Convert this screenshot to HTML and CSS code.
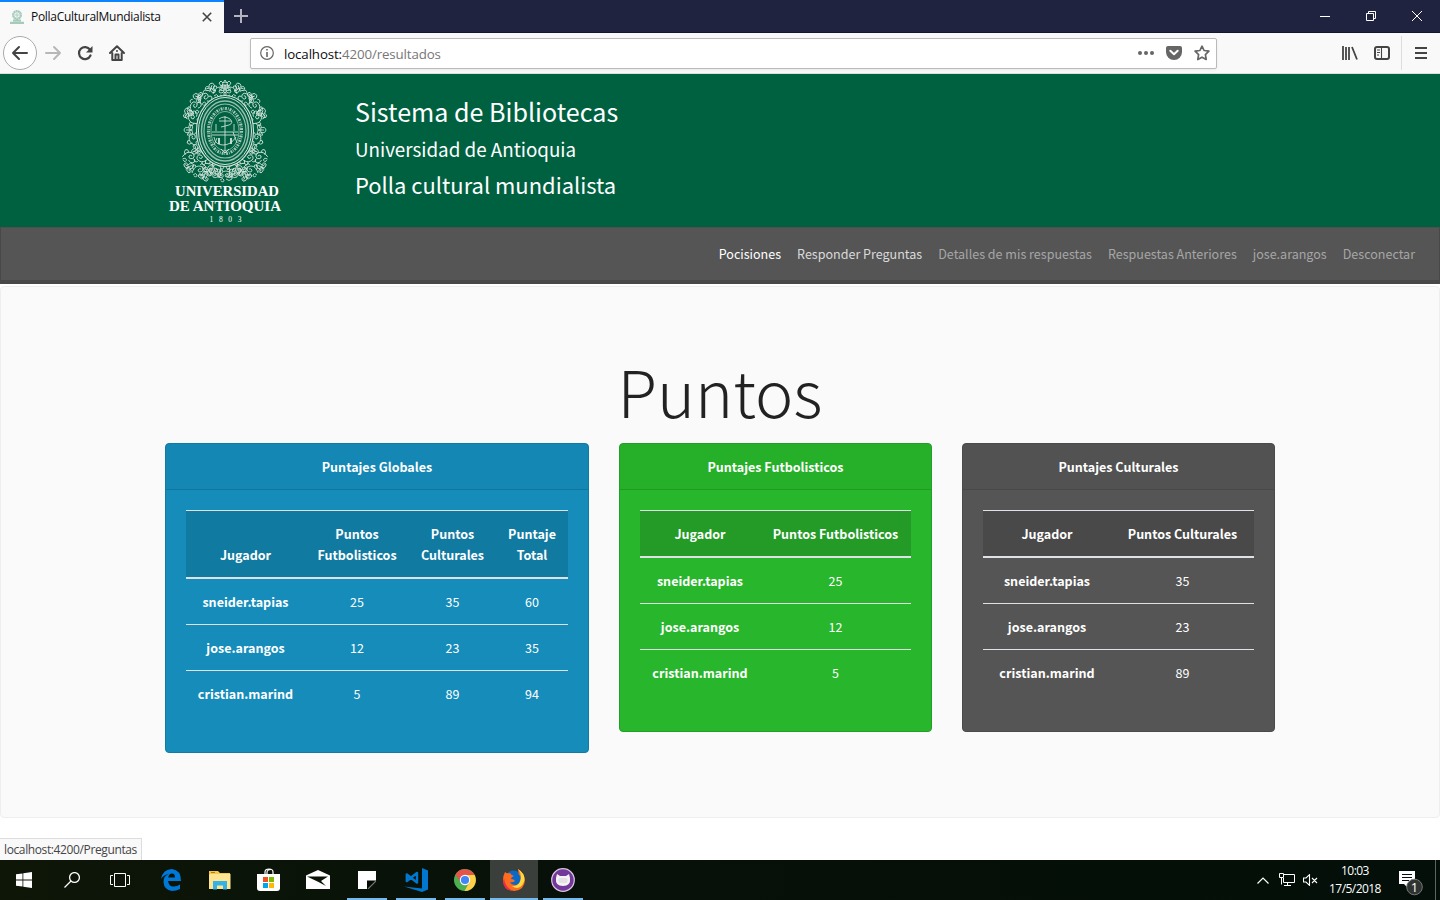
FILE: index.html
```html
<!DOCTYPE html>
<html lang="es">
<head>
<meta charset="utf-8">
<title>PollaCulturalMundialista</title>
<link rel="stylesheet" href="styles.css">
</head>
<body>
<div class="tabs">
  <div class="tab">
    <svg class="favicon" width="14" height="14" viewBox="0 0 14 14"><g fill="none" stroke="#a5cbbb"><circle cx="7" cy="5" r="3.8" stroke-width="2.400" stroke-dasharray="2 .3"/><circle cx="7" cy="5" r="1.2"/><path d="M3 10.500h8M0 12.800h14" stroke-width="2.200"/></g></svg>
    <span class="tab-title">PollaCulturalMundialista</span>
    <svg class="tab-close" width="10" height="10" viewBox="0 0 10 10"><path d="M.8.8l8.400 8.400M9.200.8L.8 9.200" stroke="#444" stroke-width="1.600"/></svg>
  </div>
  <svg class="newtab" width="14" height="14" viewBox="0 0 14 14"><path d="M7 0v14M0 7h14" stroke="#b4b4c1" stroke-width="2"/></svg>
  <div class="window-controls">
    <svg width="10" height="10"><path d="M0 5.500h10" stroke="#fff"/></svg>
    <svg width="10" height="10" fill="none" stroke="#fff"><path d="M.5 2.500h7v7h-7zM2.500 2.500v-2h7v7h-2"/></svg>
    <svg width="10" height="10"><path d="M0 0l10 10M10 0L0 10" stroke="#fff"/></svg>
  </div>
</div>
<div class="toolbar">
  <div class="back"><svg width="18" height="16" viewBox="0 0 18 16" fill="none" stroke="#444" stroke-width="2" stroke-linecap="round" stroke-linejoin="round"><path d="M8 2L2 8l6 6M2 8h14"/></svg></div>
  <svg class="forward" width="18" height="16" viewBox="0 0 18 16" fill="none" stroke="#b7b7b7" stroke-width="2" stroke-linecap="round" stroke-linejoin="round"><path d="M10 2l6 6-6 6M16 8H2"/></svg>
  <svg class="reload" width="16" height="16" viewBox="0 0 16 16"><path d="M13 4.700A6 6 0 1 0 13.500 10.500" fill="none" stroke="#444" stroke-width="2.200" stroke-linecap="round"/><path d="M15.500 1v6.500H9z" fill="#444"/></svg>
  <svg class="home" width="16" height="16" viewBox="0 0 16 16" fill="none" stroke="#444" stroke-width="2" stroke-linecap="round" stroke-linejoin="round"><path d="M1 8l7-6.700L15 8M3.300 8v7h9.400V8"/><path d="M6.500 15V9.500h3V15M8 6v.1"/></svg>
  <div class="urlbar">
    <svg width="14" height="14" viewBox="0 0 14 14"><circle cx="7" cy="7" r="6.300" fill="none" stroke="#666" stroke-width="1.200"/><path d="M7 6v5M7 3v1.600" stroke="#666" stroke-width="1.600"/></svg>
    <div class="url"><b>localhost:</b>4200/resultados</div>
    <svg class="dots" width="16" height="4" fill="#666"><circle cx="2" cy="2" r="2"/><circle cx="8" cy="2" r="2"/><circle cx="14" cy="2" r="2"/></svg>
    <svg class="pocket" width="16" height="14" viewBox="0 0 16 14"><path d="M2 0h12q2 0 2 2v4a8 8 0 0 1-16 0V2q0-2 2-2z" fill="#666"/><path d="M4.300 4.800L8 8.300l3.700-3.500" fill="none" stroke="#fff" stroke-width="2" stroke-linecap="round" stroke-linejoin="round"/></svg>
    <svg width="16" height="16" viewBox="0 0 16 16"><path d="M8 1.200l2.100 4.300 4.800.7-3.500 3.400.8 4.900L8 12.200l-4.200 2.300.8-4.900L1.100 6.200l4.800-.7z" fill="none" stroke="#666" stroke-width="1.700" stroke-linejoin="round"/></svg>
  </div>
  <svg class="library" width="16" height="14" viewBox="0 0 16 14" fill="none" stroke="#444"><path d="M1 0v14M4 1v13M7 1v13M10 1l5 12.500" stroke-width="1.800"/></svg>
  <svg class="sidebar" width="16" height="14" viewBox="0 0 16 14" fill="none" stroke="#444"><rect x="1" y="1" width="14" height="12" rx="2" stroke-width="2"/><path d="M7.500 1v12M3 4h3M3 6.500h3M3 9h2" stroke-width="1.100"/></svg>
  <div class="divider"></div>
  <svg class="menu" width="12" height="12" viewBox="0 0 12 12"><path d="M0 1h12M0 6h12M0 11h12" stroke="#444" stroke-width="2"/></svg>
</div>
<header class="banner">
  <svg class="crest" width="140" height="152" viewBox="155 75 140 152" role="img">
    <defs>
      <g id="scroll"><path d="M-6 3Q-4-4 1-4Q5-4 5-1Q5 2 2 2Q0 2 0 0Q1-2 3-1M-4 0Q-7-3-5-5Q-2-6-2-3M1 4Q4 7 7 4Q8 1 5 1M-5 5Q-2 2-1 5Q-1 8-4 6M2-5Q4-8 6-5"/></g>
      <g id="leaf"><path d="M0-5Q4-4 2 0Q6-1 5 3Q1 5 0 1Q-1 5-5 3Q-6-1-2 0Q-4-4 0-5M0-3v7M-4 2l4-2 4 2"/></g>
      <g id="side">
        <use href="#leaf" transform="translate(211 88) rotate(20)"/><use href="#scroll" x="219" y="91"/>
        <use href="#scroll" transform="translate(204 98) rotate(-30)"/><use href="#leaf" transform="translate(198 97) rotate(-70)"/>
        <use href="#scroll" transform="translate(194 107) rotate(-60)"/><use href="#leaf" transform="translate(188 113) rotate(-20)"/>
        <use href="#scroll" transform="translate(193 119) rotate(-110)"/><use href="#leaf" transform="translate(189 130) rotate(-90)"/>
        <use href="#scroll" transform="translate(193 139) rotate(-80)"/><use href="#leaf" transform="translate(196 150) rotate(-130)"/>
        <use href="#scroll" transform="translate(189 156) rotate(20)"/><use href="#scroll" transform="translate(202 158) rotate(-150)"/>
        <use href="#leaf" transform="translate(189 167) rotate(60)"/><use href="#scroll" transform="translate(198 170)"/>
        <use href="#leaf" transform="translate(204 176) rotate(30)"/><use href="#scroll" transform="translate(210 168) rotate(70)"/>
        <use href="#leaf" transform="translate(218 174)"/><use href="#scroll" transform="translate(217 169) rotate(120)"/>
        <use href="#leaf" transform="translate(209 170) rotate(40)"/>
      </g>
    </defs>
    <g fill="none" stroke="#d3e5dc" stroke-width=".85">
      <use href="#side"/><use href="#side" transform="translate(450 0) scale(-1 1)"/>
      <use href="#leaf" x="225" y="87"/><use href="#scroll" x="225" y="175"/>
      <path d="M219 83l2-2 2 2 2-3 2 3 2-2 2 2-2 3h-8z"/>
      <ellipse cx="225" cy="131" rx="28.500" ry="35.500" fill="#006141" stroke-width="1.100"/>
      <ellipse cx="225" cy="131" rx="26.500" ry="33.500" stroke-width="1"/>
      <ellipse cx="225" cy="131" rx="23.500" ry="30" stroke="#97c0af" stroke-width="1.500"/>
      <ellipse cx="225" cy="131" rx="21" ry="27" stroke="#97c0af" stroke-width="1.200"/>
      <ellipse cx="225" cy="131" rx="16.500" ry="22.500" stroke-width="3.200" stroke-dasharray="1.800 1.100 .7 1" stroke="#a4c8b9"/>
      <ellipse cx="225" cy="131" rx="14" ry="19.500" stroke-width=".6"/>
      <path d="M225 116v37M219 121h12M219 119q5-4 11 0q4 4-1 6l-8 2M212 132h26M212 135h26M214 137q1 8 9 8t13-8M217 138l-3 7M233 132l4 11M221 149l4 4 4-4M216 124v7M234 124v7"/>
      <path d="M219 138v6M231 138v6" stroke-width="1.800"/>
    </g>
    <g class="crest-text" fill="#fff" text-anchor="middle">
      <text x="227" y="195.500" font-size="14" textLength="104" lengthAdjust="spacingAndGlyphs">UNIVERSIDAD</text>
      <text x="225" y="210.500" font-size="14" textLength="112" lengthAdjust="spacingAndGlyphs">DE ANTIOQUIA</text>
      <text class="year" x="225.500" y="222" font-size="7.500" textLength="32">1803</text>
    </g>
  </svg>
  <div class="titles">
    <div class="title-main">Sistema de Bibliotecas</div>
    <div class="title-sub">Universidad de Antioquia</div>
    <div class="title-app">Polla cultural mundialista</div>
  </div>
</header>
<nav class="nav">
  <a class="active">Pocisiones</a><a class="hover">Responder Preguntas</a><a>Detalles de mis respuestas</a><a>Respuestas Anteriores</a><a>jose.arangos</a><a>Desconectar</a>
</nav>
<main class="jumbotron">
  <h1>Puntos</h1>
  <div class="cards">
    <section class="card blue">
      <div class="card-header">Puntajes Globales</div>
      <table>
        <colgroup><col class="g1"><col class="g2"><col class="g3"><col class="g4"></colgroup>
        <thead><tr><th>Jugador</th><th>Puntos<br>Futbolisticos</th><th>Puntos<br>Culturales</th><th>Puntaje<br>Total</th></tr></thead>
        <tbody>
          <tr><th>sneider.tapias</th><td>25</td><td>35</td><td>60</td></tr>
          <tr><th>jose.arangos</th><td>12</td><td>23</td><td>35</td></tr>
          <tr><th>cristian.marind</th><td>5</td><td>89</td><td>94</td></tr>
        </tbody>
      </table>
    </section>
    <section class="card green">
      <div class="card-header">Puntajes Futbolisticos</div>
      <table>
        <colgroup><col class="s1"><col class="s2"></colgroup>
        <thead><tr><th>Jugador</th><th>Puntos Futbolisticos</th></tr></thead>
        <tbody>
          <tr><th>sneider.tapias</th><td>25</td></tr>
          <tr><th>jose.arangos</th><td>12</td></tr>
          <tr><th>cristian.marind</th><td>5</td></tr>
        </tbody>
      </table>
    </section>
    <section class="card gray">
      <div class="card-header">Puntajes Culturales</div>
      <table>
        <colgroup><col class="c1"><col class="c2"></colgroup>
        <thead><tr><th>Jugador</th><th>Puntos Culturales</th></tr></thead>
        <tbody>
          <tr><th>sneider.tapias</th><td>35</td></tr>
          <tr><th>jose.arangos</th><td>23</td></tr>
          <tr><th>cristian.marind</th><td>89</td></tr>
        </tbody>
      </table>
    </section>
  </div>
</main>
<div class="status-row"><div class="status">localhost:4200/Preguntas</div></div>
<footer class="taskbar">
  <div class="system">
    <span><svg width="16" height="16" viewBox="0 0 16 16" fill="#fff"><path d="M0 2.300L6.500 1.400V7.600H0zM7.300 1.300L16 0v7.600H7.300zM0 8.400h6.500v6.200L0 13.700zM7.300 8.400H16V16l-8.700-1.300z"/></svg></span>
    <span><svg width="16" height="16" viewBox="0 0 16 16" fill="none" stroke="#fff" stroke-width="1.300"><circle cx="10.500" cy="5.500" r="4.900"/><path d="M7 9L.5 15.500"/></svg></span>
    <span><svg width="20" height="14" viewBox="0 0 20 14" fill="none" stroke="#fff"><path d="M4.500.5h11v13h-11zM3 2.500H.5v9H3M17 2.500h2.500v9H17"/></svg></span>
  </div>
  <div class="apps">
    <span><svg width="20" height="22" viewBox="0 0 20 22"><path d="M0 10Q2 0 11 0q9 1 9 12H7q1 6 6 5.500 3 0 6-2v4.500q-4 2-8 2Q3 21 2.500 13 2 7 8 4.700 3 5.500 0 10zM7.200 8.500H14Q14 4.500 11 4.500T7.200 8.500z" fill="#0078d7" fill-rule="evenodd"/></svg></span>
    <span><svg width="22" height="19" viewBox="0 0 22 19"><path d="M0 0h9l2 2h10v16H0z" fill="#f3c84b"/><path d="M1 3h20.500v15H0V4z" fill="#ffe592"/><path d="M4 10h14v8.500h-4v-4H8v4H4z" fill="#35b1e6"/><path d="M2 1.500h4" stroke="#b97b13"/></svg></span>
    <span><svg width="24" height="24" viewBox="0 0 24 24"><path d="M8 7V4q0-3 4-3t4 3v3M10 7V4.500q0-3 4-3" fill="none" stroke="#fff" stroke-width="1.200"/><path d="M0 6h23v14q0 3-3 3H3q-3 0-3-3z" fill="#fff"/><path d="M6 9h5v5H6z" fill="#f25022"/><path d="M12 9h5v5h-5z" fill="#7fba00"/><path d="M6 15h5v5H6z" fill="#00a4ef"/><path d="M12 15h5v5h-5z" fill="#ffb900"/></svg></span>
    <span><svg width="24" height="20" viewBox="0 0 24 20"><path d="M0 5.500L12 0l12 5.500V19H0z" fill="#fff"/><path d="M1 6.500h21L15 11l5 5-8-4.300z" fill="#0a1306"/></svg></span>
    <span class="open"><svg width="18" height="18"><path d="M0 0h18v18H0z" fill="#fff"/><path d="M9 9.500h9V10l-8 8H9z" fill="#060a04"/><path d="M10.500 18L18 10.500V18z" fill="#0a1208"/><path d="M10 17.500l7.500-7.500" stroke="#6e736c" stroke-width=".8"/></svg></span>
    <span class="open"><svg width="24" height="24" viewBox="0 0 24 24"><path d="M18 0l6 2.500v19L18 24 0 18.500l18 2z" fill="#0078d0"/><path d="M2.800 6.500L13 14.500V5L2.800 13z" fill="none" stroke="#0078d0" stroke-width="2.400" stroke-linejoin="round"/></svg></span>
    <span class="open"><svg width="22" height="22" viewBox="0 0 22 22"><circle cx="11" cy="11" r="11" fill="#4caf50"/><path d="M1.500 5.500A11 11 0 0 1 20.600 6H11l-4.300 7.500z" fill="#e5534b"/><path d="M20.600 6A11 11 0 0 1 10.500 22l4.800-8.500L11 6z" fill="#ffcf46"/><circle cx="11" cy="11" r="5.200" fill="#fff"/><circle cx="11" cy="11" r="4.100" fill="#4285f4"/></svg></span>
    <span class="open current"><svg width="24" height="24" viewBox="0 0 24 24"><circle cx="11.500" cy="11" r="8.500" fill="#0869c7"/><path d="M3 4Q0 10 1.500 15q3 8 11 8 10-1 10.500-11Q22 5 16 1q0 5 2.500 8 1 7-4.500 8-5 0-6-3 3 1 5-1-1-2-4-2 0-2 3-3-3-1-4-3Q5 6 3 4z" fill="#ff6c20"/><path d="M16 1q4 5 2.500 11-2 7-9 6 8 5 12-3Q25 7 16 1z" fill="#ffd83f"/><path d="M2 10q1 10 10 13-10 0-11-9z" fill="#e92d48"/></svg></span>
    <span class="open"><svg width="24" height="24" viewBox="0 0 24 24"><circle cx="12" cy="12" r="11.300" fill="#74389a" stroke="#d8c8e2" stroke-width="1.200"/><path d="M6 6l3 2h6l3-2 1 4q1 8-7 8T5 10z" fill="#f4f4f4"/><rect x="7.500" y="10" width="9" height="5" rx="2" fill="#e2e2e2"/></svg></span>
  </div>
  <div class="tray">
    <svg width="12" height="7" viewBox="0 0 12 7"><path d="M.5 6.500L6 1l5.500 5.500" fill="none" stroke="#fff" stroke-width="1.200"/></svg>
    <svg class="net" width="16" height="14" viewBox="0 0 16 14" fill="none" stroke="#fff"><path d="M5 1.500h10.500v8H4.500V5M8.500 9.500v3M5 12.500h7M.5.500h4v4h-4zM2.500 4.500v7"/></svg>
    <svg class="sound" width="15" height="12" viewBox="0 0 15 12" fill="none" stroke="#fff" stroke-width="1.100"><path d="M.5 4H3l3.500-3.300v10.600L3 8H.5zM9 4l5 5M14 4L9 9"/></svg>
    <div class="clock">10:03<br>17/5/2018</div>
    <svg class="notify" width="26" height="26" viewBox="0 0 26 26"><path d="M0 1h16v13H8v3l-3-3H0z" fill="#fff"/><path d="M3 4.500h10M3 7.500h10M3 10.500h7" stroke="#05100a"/><circle cx="15.500" cy="17" r="7.800" fill="#303431" stroke="#777"/><text x="15.500" y="21.500" text-anchor="middle" fill="#fff" font-size="13">1</text></svg>
    <div class="desk"></div>
  </div>
</footer>
</body>
</html>
```
FILE: styles.css
```css
* { box-sizing: border-box; }
body { margin: 0; width: 1440px; height: 900px; overflow: hidden; display: flex; flex-direction: column; background: #fff; font: 12.54px/21px "Noto Sans CJK SC", sans-serif; color: #222; }
svg { display: block; flex: none; }
.tabs { height: 33px; flex: none; display: flex; align-items: center; background: #202340; border-bottom: 1px solid #14162b; }
.tab { width: 224px; height: 33px; flex: none; align-self: flex-start; display: flex; align-items: center; padding: 0 12px 1px 10px; background: #f9f9fa; border-top: 2px solid #0a84ff; }
.tab-title { font: 12px/16px "Open Sans", sans-serif; color: #0c0c0d; letter-spacing: -.29px; margin-left: 7px; flex: 1; white-space: nowrap; }
.newtab { margin-left: 10px; }
.window-controls { margin-left: auto; display: flex; gap: 36px; padding-right: 18px; }
.toolbar { height: 41px; flex: none; display: flex; align-items: center; background: #f9f9fa; border-bottom: 1px solid #ddd; padding-left: 3px; }
.back { width: 34px; height: 34px; flex: none; border: 1px solid #aaa; border-radius: 50%; background: #fff; display: flex; align-items: center; justify-content: center; }
.forward { margin-left: 7px; }
.reload { margin-left: 15px; }
.home { margin-left: 16px; }
.urlbar { width: 967px; height: 31px; flex: none; margin-left: 125px; border: 1px solid #bbb; border-radius: 2px; box-shadow: 0 1px 3px #0001; background: #fff; display: flex; align-items: center; padding: 0 6px 0 9px; }
.url { flex: 1; margin-left: 10px; padding-top: 2px; font: 13.3px/20px "Open Sans", sans-serif; letter-spacing: -.12px; color: #777; }
.url b { font-weight: 400; color: #0c0c0d; }
.pocket { margin: 0 12px; }
.library { margin-left: 125px; }
.sidebar { margin-left: 16px; }
.divider { width: 1px; height: 34px; margin-left: 11px; background: #ddd; }
.menu { margin-left: 13px; }
.banner { height: 153px; flex: none; background: #006141; display: flex; padding-left: 155px; }
.crest { margin-top: 1px; }
.crest-text { font-family: "Liberation Serif", serif; font-weight: 700; }
.crest-text .year { font-weight: 400; }
.titles { margin-left: 60px; padding-top: 18px; color: #fff; white-space: nowrap; }
.title-main { font-size: 25.1px; line-height: 38px; }
.title-sub { font-size: 18.8px; line-height: 36px; margin-top: 1px; }
.title-app { font-size: 21.95px; line-height: 36px; }
.nav { height: 57px; flex: none; background: #555; border: 1px solid #484848; border-top-color: #4e4e4e; border-bottom: 4px solid #484848; display: flex; justify-content: flex-end; align-items: center; gap: 16px; padding: 0 24px 2px 0; color: #a6a6a6; }
.nav .active { color: #fff; }
.nav .hover { color: #dadada; }
.jumbotron { height: 532px; flex: none; margin-top: 2px; background: #fafafa; border: 1px solid #eee; border-radius: 4px; padding: 61px 164px 0; }
h1 { margin: 0 0 10px; height: 85px; line-height: 85px; font-size: 64.5px; font-weight: 300; text-align: center; color: #222; }
.cards { display: flex; gap: 30px; align-items: flex-start; }
.card { width: 313px; padding: 0 20px 36px; border: 1px solid #4a4a4a; border-radius: 4px; background: #555; color: #fff; text-align: center; }
.card.blue { width: 424px; background: #158cba; border-color: #127ba3; }
.card.green { background: #28b62c; border-color: #239f27; }
.card-header { height: 46px; margin: 0 -20px 20px; line-height: 45px; font-weight: 700; background: #00000008; border-bottom: 1px solid #0000001f; }
table { width: 100%; border-collapse: separate; border-spacing: 0; table-layout: fixed; }
th, td { padding: 12px 0; height: 46px; border-top: 1px solid #dee2e6; vertical-align: bottom; }
th { font-weight: 700; }
td { font-weight: 400; }
thead th { background: #117aa1; border-bottom: 2px solid #dee2e6; height: 48px; }
tbody tr:first-child th, tbody tr:first-child td { border-top: 0; height: 45px; }
.green thead th { background: #239b26; }
.gray thead th { background: #494949; }
.g1 { width: 119px; } .g2 { width: 104px; } .g3 { width: 87px; } .g4 { width: 72px; }
.s1 { width: 120px; } .s2 { width: 151px; } .c1 { width: 128px; } .c2 { width: 143px; }
.status-row { flex: 1; display: flex; align-items: flex-end; }
.status { height: 22px; width: 142px; padding-left: 4px; border: 1px solid #ddd; border-left: 0; border-bottom: 0; background: #f9f9fa; color: #444; font: 12px/22px "Open Sans", sans-serif; letter-spacing: -.38px; white-space: nowrap; }
.taskbar { height: 40px; flex: none; display: flex; background: linear-gradient(90deg, #0d1607, #071009 45%, #030f08); }
.system, .apps { display: flex; }
.taskbar span { width: 48px; height: 40px; display: flex; align-items: center; justify-content: center; position: relative; }
.apps { margin-left: 3px; gap: 1px; }
.open::after { content: ""; position: absolute; left: 4px; right: 4px; bottom: 0; height: 2px; background: #76b9ed; }
.current { background: #3a3f3b; }
.current::after { left: 0; right: 0; }
.tray { margin-left: auto; display: flex; align-items: center; color: #fff; }
.net { margin-left: 10px; }
.sound { margin-left: 8px; }
.clock { width: 74px; text-align: center; font: 12px/18px "Open Sans", sans-serif; letter-spacing: -.55px; }
.notify { margin: 6px 0 0 7px; font-family: "Open Sans", sans-serif; }
.desk { width: 5px; height: 40px; margin-left: 10px; border-left: 1px solid #5c645f; }
```
